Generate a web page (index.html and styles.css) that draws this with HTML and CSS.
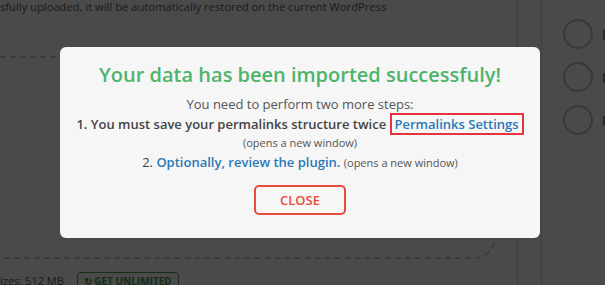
FILE: index.html
```html
<!DOCTYPE html>
<html lang="en">
<head>
    <meta charset="UTF-8">
    <meta name="viewport" content="width=device-width, initial-scale=1.0">
    <title>Import finished</title>
    <link rel="stylesheet" href="styles.css">
</head>
<body>
    <div class="page">
        <div class="main">
            <p class="intro">sfully uploaded, it will be automatically restored on the current WordPress</p>
            <div class="dropzone"></div>
            <p class="limits">izes: 512 MB <span class="badge"><span class="badge-icon">&#8635;</span> GET UNLIMITED</span></p>
        </div>
        <div class="spacer"></div>
        <div class="sidebar">
            <div class="option"><span class="radio"></span><span class="opt-label">I</span></div>
            <div class="option"><span class="radio"></span><span class="opt-label">I</span></div>
            <div class="option"><span class="radio"></span><span class="opt-label">I</span></div>
        </div>
    </div>

    <div class="overlay">
        <div class="modal">
            <h2 class="modal-title">Your data has been imported successfuly!</h2>
            <p class="step-intro">You need to perform two more steps:</p>
            <p class="step step-one">1. You must save your permalinks structure twice <a href="#" class="boxed">Permalinks Settings</a></p>
            <p class="hint">(opens a new window)</p>
            <p class="step">2. <a href="#">Optionally, review the plugin.</a> <span class="hint">(opens a new window)</span></p>
            <button class="close-btn">CLOSE</button>
        </div>
    </div>
</body>
</html>
```

FILE: styles.css
```css
body {
    margin: 0;
    font-family: 'Open Sans', 'Liberation Sans', sans-serif;
    background-color: #f7f7f7;
    color: #5c5c5c;
    width: 605px;
    height: 285px;
    overflow: hidden;
}
.page {
    display: flex;
    height: 285px;
}
.main {
    width: 518px;
    flex-shrink: 0;
    border-right: 1px solid #cfcfcf;
    box-sizing: border-box;
}
.intro {
    margin: 0;
    font-size: 11.2px;
    line-height: 14px;
    white-space: nowrap;
}
.dropzone {
    margin: 42px 0 0 -30px;
    width: 526px;
    height: 203px;
    border: 2px dashed #c6c6c6;
    border-left: none;
    border-radius: 0 22px 22px 0;
    box-sizing: border-box;
}
.limits {
    margin: 13px 0 0;
    font-size: 11px;
    white-space: nowrap;
}
.badge {
    display: inline-block;
    margin-left: 10px;
    padding: 1px 6px;
    border: 1px solid #4a9a4a;
    border-radius: 4px;
    color: #4a9a4a;
    font-size: 10px;
    font-weight: 700;
}
.badge-icon {
    font-size: 10px;
}
.spacer {
    width: 23px;
    flex-shrink: 0;
    border-right: 1px solid #cfcfcf;
}
.sidebar {
    padding: 19px 0 0 21px;
    display: flex;
    flex-direction: column;
    gap: 13px;
}
.option {
    display: flex;
    align-items: center;
    gap: 9px;
}
.radio {
    width: 26px;
    height: 26px;
    border: 2px solid #bcbcbc;
    border-radius: 50%;
}
.opt-label {
    font-size: 14px;
    color: #5a3b3b;
}
.overlay {
    position: fixed;
    inset: 0;
    background-color: rgba(0, 0, 0, 0.7);
}
.modal {
    position: absolute;
    left: 60px;
    top: 47px;
    width: 480px;
    height: 191px;
    box-sizing: border-box;
    background-color: #f6f6f6;
    border-radius: 6px;
    text-align: center;
    padding-top: 15px;
    color: #555;
}
.modal-title {
    margin: 0 0 6px;
    font-size: 20px;
    font-weight: 600;
    line-height: 26px;
    color: #4db46a;
}
.modal p {
    margin: 0;
}
.step-intro {
    font-size: 13px;
    line-height: 20px;
    margin-bottom: 2px;
}
.step {
    font-size: 13px;
    line-height: 20px;
    color: #444;
}
.step-one {
    font-weight: 600;
}
.step a {
    color: #2a79b5;
    font-weight: 600;
    text-decoration: none;
}
.boxed {
    border: 2px solid #e3343f;
    padding: 0 3px;
}
.hint {
    font-size: 11px;
    line-height: 18px;
    color: #555;
    font-weight: 400;
}
.close-btn {
    margin-top: 13px;
    width: 92px;
    height: 30px;
    border: 2px solid #e74c3c;
    border-radius: 5px;
    background-color: transparent;
    color: #e74c3c;
    font-family: inherit;
    font-size: 13px;
    font-weight: 600;
    cursor: pointer;
}
```
